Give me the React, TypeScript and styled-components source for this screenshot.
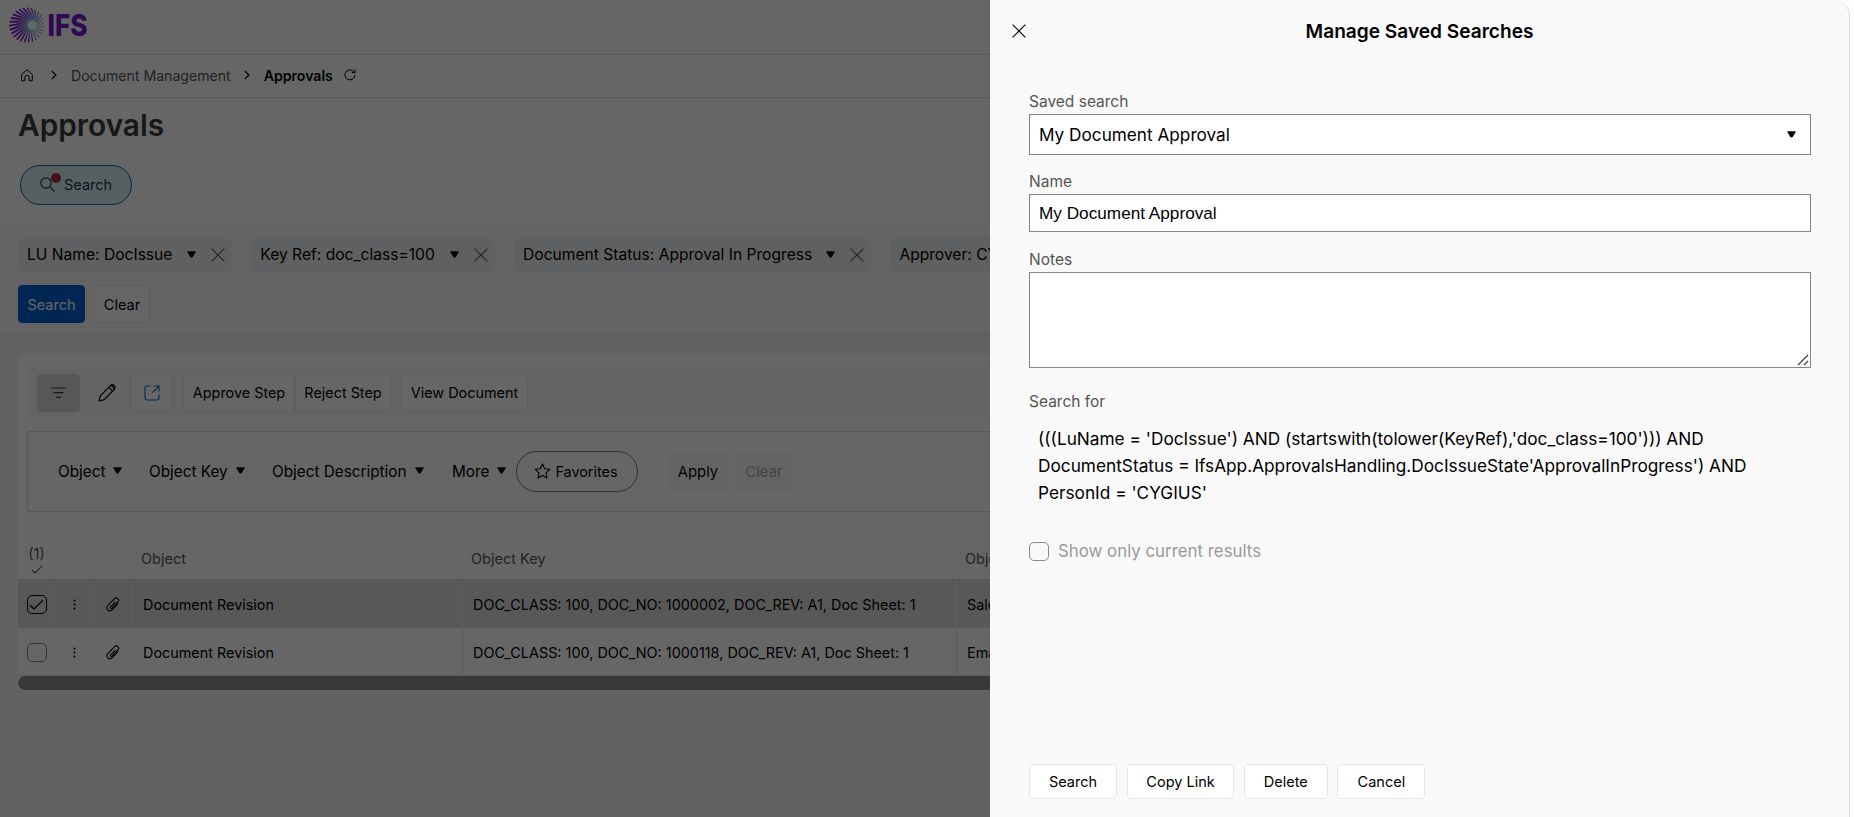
import React from "react";
import styled, { createGlobalStyle, css } from "styled-components";

const GlobalStyle = createGlobalStyle`
  * {
    box-sizing: border-box;
  }

  body {
    margin: 0;
    overflow: hidden;
    background: #f6f4f4;
    color: #000;
    font-family: Inter, "Liberation Sans", sans-serif;
    font-size: 15px;
  }

  button,
  input {
    margin: 0;
    font-family: inherit;
    color: inherit;
  }
`;

const filters = [
  { label: "LU Name: DocIssue", width: 214 },
  { label: "Key Ref: doc_class=100", width: 243.5 },
  { label: "Document Status: Approval In Progress", width: 357 },
  { label: "Approver: CYGIUS", width: 214 },
];

const columnFilters = [
  { label: "Object", width: 91 },
  { label: "Object Key", width: 123 },
  { label: "Object Description", width: 180 },
  { label: "More", width: 64 },
];

const rows = [
  {
    object: "Document Revision",
    key: "DOC_CLASS: 100, DOC_NO: 1000002, DOC_REV: A1, Doc Sheet: 1",
    description: "Sales",
    selected: true,
  },
  {
    object: "Document Revision",
    key: "DOC_CLASS: 100, DOC_NO: 1000118, DOC_REV: A1, Doc Sheet: 1",
    description: "Email",
    selected: false,
  },
];

const RAYS = 27;

const Logo = () => (
  <svg width="92" height="44" viewBox="0 0 92 44">
    <defs>
      <radialGradient id="rays" gradientUnits="userSpaceOnUse" cx="25" cy="19" r="22">
        <stop offset="0.15" stopColor="#9adfe6" />
        <stop offset="0.45" stopColor="#8a78d8" />
        <stop offset="0.75" stopColor="#7a14d0" />
      </radialGradient>
    </defs>
    {Array.from({ length: RAYS }, (_, i) => {
      const a = (i / RAYS) * Math.PI * 2 + 0.08;
      const b = a + 0.55;
      // rays get thinner towards the right side of the wheel
      const w = 1.4 - 0.6 * Math.cos(a);
      return (
        <line
          key={i}
          x1={24.2 + 5.2 * Math.cos(b)}
          y1={19 + 5.2 * Math.sin(b)}
          x2={19 + 17 * Math.cos(a)}
          y2={19 + 17 * Math.sin(a)}
          stroke="url(#rays)"
          strokeWidth={w}
          strokeLinecap="round"
        />
      );
    })}
    <text
      x="39.5"
      y="30.3"
      fontFamily="Inter, sans-serif"
      fontWeight="800"
      fontSize="30.5"
      textLength="40"
      lengthAdjust="spacingAndGlyphs"
      fill="#7a14d0"
    >
      IFS
    </text>
  </svg>
);

const HomeIcon = () => (
  <svg width="12" height="13" viewBox="0 0 12 13" fill="none" stroke="#000" strokeWidth="1">
    <path d="M.7 5.4 6 .8l5.3 4.600v6.400H8.200V8.600a2.200 2.200 0 0 0-4.400 0v3.200H.7z" strokeLinejoin="round" />
  </svg>
);

const ChevronIcon = () => (
  <svg width="6" height="10" viewBox="0 0 6 10" fill="none" stroke="#000" strokeWidth="1.1">
    <path d="m.8 1 4.200 4-4.200 4" />
  </svg>
);

const RefreshIcon = () => (
  <svg width="12" height="12" viewBox="0 0 12 12" fill="none" stroke="#000" strokeWidth="1">
    <path d="M10.900 6A5 5 0 1 1 9.200 2.100L10.800 3.400" />
    <path d="M11 .4v3.200H7.800" />
  </svg>
);

const SearchIcon = () => (
  <svg width="15" height="15" viewBox="0 0 15 15" fill="none" stroke="#17365c" strokeWidth="1.200">
    <circle cx="6" cy="6" r="5.200" />
    <path d="m9.800 9.800 4.800 4.800" />
  </svg>
);

const Caret = () => (
  <svg width="9" height="7" viewBox="0 0 9 7">
    <path d="M.8.2h7.400q.8.200.5.900L5.700 6q-1.200 1-2.400 0L.3 1.100Q0 .4.800.2z" fill="#000" />
  </svg>
);

const CrossIcon = ({ color = "#555" }: { color?: string }) => (
  <svg width="14" height="14" viewBox="0 0 14 14" fill="none" stroke={color} strokeWidth="1.1">
    <path d="m.6.6 12.800 12.800M13.400.6.6 13.400" />
  </svg>
);

const FilterIcon = () => (
  <svg width="15" height="12" viewBox="0 0 15 12" fill="none" stroke="#334" strokeWidth="1.2">
    <path d="M.4 1h14.200M2.600 5.600h9.800M5 10.400h5" />
  </svg>
);

const PencilIcon = () => (
  <svg width="18" height="18" viewBox="0 0 18 18" fill="none" stroke="#000" strokeWidth="1.2">
    <path d="m1 17 1.300-5.200L12.400 1.700a2.600 2.600 0 0 1 3.800 3.800L6.200 15.600z" strokeLinejoin="round" />
    <path d="m10.800 3.400 3.700 3.700M12.400 1.700c2 .2 3.600 1.800 3.800 3.800" />
  </svg>
);

const OpenIcon = () => (
  <svg width="16" height="16" viewBox="0 0 16 16" fill="none" stroke="#1673c8" strokeWidth="1.2">
    <path d="M6.400 1H3.200A2.300 2.300 0 0 0 1 3.200v9.600A2.300 2.300 0 0 0 3.200 15h9.600a2.300 2.300 0 0 0 2.200-2.200V9.600" />
    <path d="M9.600 1H15v5.400M15 1 8.400 7.600" />
  </svg>
);

const StarIcon = () => (
  <svg width="17" height="16" viewBox="0 0 17 16" fill="none" stroke="#000" strokeWidth="1.1">
    <path
      d="m8.500 1 2.200 4.700 5.100.6-3.800 3.500 1 5.100-4.500-2.500L4 14.900l1-5.100L1.200 6.300l5.100-.6z"
      strokeLinejoin="round"
    />
  </svg>
);

const CheckIcon = ({ width, color }: { width: number; color: string }) => (
  <svg width={width} height={width * 0.75} viewBox="0 0 16 12" fill="none" stroke={color} strokeWidth="1.4">
    <path d="m1 6.600 4.400 4L15 1.200" />
  </svg>
);

const DotsIcon = () => (
  <svg width="3" height="11" viewBox="0 0 3 11" fill="#000">
    <circle cx="1.500" cy="1.600" r="1" />
    <circle cx="1.500" cy="5.500" r="1" />
    <circle cx="1.500" cy="9.400" r="1" />
  </svg>
);

const ClipIcon = () => (
  <svg width="14" height="15" viewBox="0 0 14 15" fill="none" stroke="#000" strokeWidth="1.1">
    <path d="M9.500 4.800 4.700 9.900c-.9 1 .4 2.200 1.300 1.300l6-6.400c2-2.300-1-5.300-3.400-3.200L2 8.400c-2.900 3.300 1.100 7.400 4.300 4.300l5.500-5.900" />
  </svg>
);

const ResizeGrip = () => (
  <svg width="12" height="12" viewBox="0 0 12 12" fill="none" stroke="#444" strokeWidth="1.3">
    <path d="M1 11 11 1M7 11l4-4" />
  </svg>
);

export default function App() {
  return (
    <>
      <GlobalStyle />
      <Page>
        <TopBar>
          <Logo />
        </TopBar>
        <Breadcrumbs>
          <HomeIcon />
          <ChevronIcon />
          <Crumb>Document Management</Crumb>
          <ChevronIcon />
          <Crumb $current>Approvals</Crumb>
          <RefreshIcon />
        </Breadcrumbs>
        <Heading>
          <Title>Approvals</Title>
          <SearchPill>
            <PillIcon>
              <SearchIcon />
              <Dot />
            </PillIcon>
            Search
          </SearchPill>
        </Heading>
        <FilterSection>
          <ChipRow>
            {filters.map((f) => (
              <Chip key={f.label} $width={f.width}>
                <ChipLabel>{f.label}</ChipLabel>
                <Caret />
                <CrossIcon />
              </Chip>
            ))}
          </ChipRow>
          <ButtonRow>
            <Button $width={67} $primary>
              Search
            </Button>
            <Button $width={56}>Clear</Button>
          </ButtonRow>
        </FilterSection>
        <Card>
          <Toolbar>
            <IconButton $active>
              <FilterIcon />
            </IconButton>
            <IconButton $bare>
              <PencilIcon />
            </IconButton>
            <IconButton>
              <OpenIcon />
            </IconButton>
            <ButtonGroup>
              <GroupButton $width={110}>Approve Step</GroupButton>
              <GroupButton $width={96}>Reject Step</GroupButton>
            </ButtonGroup>
            <ButtonGroup>
              <GroupButton $width={125}>View Document</GroupButton>
            </ButtonGroup>
          </Toolbar>
          <ColumnFilters>
            {columnFilters.map((f) => (
              <ColumnFilter key={f.label} $width={f.width}>
                {f.label}
                <Caret />
              </ColumnFilter>
            ))}
            <Favorites>
              <StarIcon />
              Favorites
            </Favorites>
            <Button $width={58} $flat>
              Apply
            </Button>
            <Button $width={54} $flat disabled>
              Clear
            </Button>
          </ColumnFilters>
          <HeaderRow>
            <SelectionCount>
              (1)
              <CheckIcon width={12} color="#555" />
            </SelectionCount>
            <span />
            <span />
            <HeaderCell>Object</HeaderCell>
            <HeaderCell>Object Key</HeaderCell>
            <HeaderCell>Object Description</HeaderCell>
          </HeaderRow>
          {rows.map((row) => (
            <Row key={row.key} $selected={row.selected}>
              <IconCell>
                <Checkbox $checked={row.selected}>
                  {row.selected && <CheckIcon width={15} color="#000" />}
                </Checkbox>
              </IconCell>
              <IconCell>
                <DotsIcon />
              </IconCell>
              <IconCell>
                <ClipIcon />
              </IconCell>
              <Cell>{row.object}</Cell>
              <Cell $line>{row.key}</Cell>
              <Cell $line>{row.description}</Cell>
            </Row>
          ))}
          <ScrollBar />
        </Card>
      </Page>
      <Scrim>
        <DrawerEdge>
          <Drawer>
            <DrawerHeader>
              <CrossIcon color="#000" />
              <DrawerTitle>Manage Saved Searches</DrawerTitle>
            </DrawerHeader>
            <Form>
              <Label>Saved search</Label>
              <Select>
                My Document Approval
                <Caret />
              </Select>
              <Label $top={17}>Name</Label>
              <NameInput defaultValue="My Document Approval" />
              <Label $top={18}>Notes</Label>
              <Notes>
                <ResizeGrip />
              </Notes>
              <Label $top={24}>Search for</Label>
              <Query>
                (((LuName = 'DocIssue') AND (startswith(tolower(KeyRef),'doc_class=100'))) AND
                <br />
                DocumentStatus = IfsApp.ApprovalsHandling.DocIssueState'ApprovalInProgress') AND
                <br />
                PersonId = 'CYGIUS'
              </Query>
              <OnlyCurrent>
                <Checkbox $checked={false} />
                Show only current results
              </OnlyCurrent>
            </Form>
            <DrawerActions>
              <ActionButton $width={88}>Search</ActionButton>
              <ActionButton $width={107.5}>Copy Link</ActionButton>
              <ActionButton $width={83.5}>Delete</ActionButton>
              <ActionButton $width={88}>Cancel</ActionButton>
            </DrawerActions>
          </Drawer>
        </DrawerEdge>
      </Scrim>
    </>
  );
}

const Page = styled.div`
  height: 817px;
  overflow: hidden;
  white-space: nowrap;
`;

const TopBar = styled.header`
  height: 55px;
  padding: 6px 8px;
  background: #fff;
  border-bottom: 1px solid #dcdcdc;
`;

const Breadcrumbs = styled.nav`
  display: flex;
  align-items: center;
  height: 43px;
  padding: 0 21px 2px;
  background: #fff;
  border-bottom: 1px solid #dcdcdc;

  svg {
    flex: none;
  }

  svg:nth-of-type(2) {
    margin: 0 14px 0 18px;
  }

  svg:nth-of-type(3) {
    margin: 0 14px 0 13px;
  }

  svg:last-child {
    margin-left: 11px;
  }
`;

const Crumb = styled.span<{ $current?: boolean }>`
  font-size: 14.1px;
  color: ${(p) => (p.$current ? "#000" : "#555")};
  font-weight: ${(p) => (p.$current ? 600 : 400)};
`;

const Heading = styled.section`
  height: 127px;
  padding: 8px 18px 0;
  background: #fff;
`;

const Title = styled.h1`
  margin: 0 0 21px;
  font-size: 29.800px;
  font-weight: 600;
  line-height: 38px;
  color: #3c3c3c;
`;

const SearchPill = styled.div`
  display: flex;
  align-items: center;
  width: 112px;
  height: 40px;
  margin-left: 2px;
  padding: 0 0 1px 19px;
  border: 1px solid #0a5fc0;
  border-radius: 20px;
  background: #d8f0f0;
  color: #17365c;
  font-size: 14.5px;
`;

const PillIcon = styled.span`
  position: relative;
  display: flex;
  margin-right: 9px;
`;

const Dot = styled.i`
  position: absolute;
  top: -4px;
  left: 11px;
  width: 10px;
  height: 10px;
  border-radius: 50%;
  background: #b82850;
`;

const FilterSection = styled.section`
  height: 109px;
  padding: 12px 18px 0;
  background: #fbf9f9;
  border: solid #ebe9e9;
  border-width: 1px 0;
`;

const ChipRow = styled.div`
  display: flex;
  gap: 19.3px;
`;

const Chip = styled.div<{ $width: number }>`
  display: flex;
  align-items: center;
  flex: none;
  width: ${(p) => p.$width}px;
  height: 34px;
  padding: 0 7px 1px 9px;
  border-radius: 6px;
  background: #edf0f2;

  svg + svg {
    margin-left: 15px;
  }
`;

const ChipLabel = styled.span`
  flex: 1;
  font-size: 15.6px;
`;

const ButtonRow = styled.div`
  display: flex;
  gap: 9px;
  margin-top: 13px;
`;

const Button = styled.button<{ $width: number; $primary?: boolean; $flat?: boolean }>`
  width: ${(p) => p.$width}px;
  height: 38px;
  padding: 0;
  border: 1px solid #eceaea;
  border-radius: 4px;
  background: #fff;
  font-size: 14.5px;

  ${(p) =>
    p.$primary &&
    css`
      border-color: #0062d1;
      background: #0062d1;
      color: #fff;
    `}

  ${(p) =>
    p.$flat &&
    css`
      background: #fbfbfb;
      border-color: #f2f2f2;
      font-size: 14.8px;
    `}

  &:disabled {
    color: #aaa;
  }
`;

const Card = styled.section`
  margin: 20px 0 0 18px;
  padding-top: 10px;
  border-radius: 8px 0 0 0;
  background: #fff;
`;

const Toolbar = styled.div`
  display: flex;
  align-items: center;
  height: 57px;
  margin-left: 9px;
  padding: 0 10px;
  gap: 10px;
  background: #fafafa;
`;

const IconButton = styled.button<{ $active?: boolean; $bare?: boolean }>`
  display: flex;
  align-items: center;
  justify-content: center;
  width: 43px;
  height: 38px;
  padding: 0;
  border: 1px solid #ececec;
  border-radius: 4px;
  background: #fff;

  ${(p) =>
    p.$active &&
    css`
      border-color: #dadada;
      background: #dadada;
    `}

  ${(p) =>
    p.$bare &&
    css`
      width: 30px;
      padding-left: 3px;
      border: 0;
      background: none;
    `}
`;

const ButtonGroup = styled.div`
  display: flex;
  height: 38px;
  border: 1px solid #ececec;
  border-radius: 4px;
  background: #fff;
`;

const GroupButton = styled.button<{ $width: number }>`
  width: ${(p) => p.$width}px;
  padding: 0;
  border: 0;
  background: none;
  font-size: 14.4px;

  & + & {
    border-left: 2px solid #ececec;
  }
`;

const ColumnFilters = styled.div`
  display: flex;
  align-items: center;
  height: 81px;
  margin: 10px 0 0 9px;
  padding-left: 30px;
  border: 1px solid #dcdcdc;

  button + button {
    margin-left: 10px;
  }
`;

const ColumnFilter = styled.div<{ $width: number }>`
  display: flex;
  align-items: center;
  flex: none;
  width: ${(p) => p.$width}px;
  font-size: 15.3px;

  svg {
    margin: -2px 0 0 8px;
  }
`;

const Favorites = styled.div`
  display: flex;
  align-items: center;
  justify-content: center;
  gap: 4px;
  width: 122px;
  height: 41px;
  margin-right: 31px;
  padding: 0 2px 1px 0;
  border: 1px solid #777;
  border-radius: 21px;
  font-size: 14.4px;
`;

const gridColumns = css`
  display: grid;
  grid-template-columns: 37px 39px 38px 330px 494px 1fr;
`;

const HeaderRow = styled.div`
  ${gridColumns}
  height: 67px;
  color: #555;
  font-size: 14.5px;
`;

const SelectionCount = styled.div`
  display: flex;
  flex-direction: column;
  align-items: center;
  gap: 3px;
  padding-top: 33px;
`;

const HeaderCell = styled.div`
  padding: 38px 0 0 9px;
`;

const Row = styled.div<{ $selected: boolean }>`
  ${gridColumns}
  height: 48.5px;
  background: ${(p) => (p.$selected ? "#dcdcdc" : "#fff")};
  border-bottom: 1px solid #e6e6e6;

  & > * {
    padding-top: ${(p) => (p.$selected ? 3 : 2)}px;
    box-shadow: ${(p) => (p.$selected ? "inset -1px 0 #ebebeb" : "none")};
  }
`;

const IconCell = styled.div`
  display: flex;
  align-items: center;
  justify-content: center;
`;

const Cell = styled.div<{ $line?: boolean }>`
  display: flex;
  align-items: center;
  padding-left: ${(p) => (p.$line ? 10 : 11)}px;
  border-left: ${(p) => (p.$line ? "1px solid #e2e2e2" : 0)};
  font-size: 14.4px;
`;

const Checkbox = styled.span<{ $checked: boolean }>`
  display: flex;
  align-items: center;
  justify-content: center;
  flex: none;
  width: 20px;
  height: 19px;
  border: 1px solid ${(p) => (p.$checked ? "#000" : "#8a8a8a")};
  border-radius: 5px;
`;

const ScrollBar = styled.div`
  height: 14px;
  border-radius: 7px 0 0 7px;
  background: #8f8f8f;
`;

const Scrim = styled.div`
  position: fixed;
  inset: 0;
  display: flex;
  justify-content: flex-end;
  background: rgba(0, 0, 0, 0.6);
`;

const DrawerEdge = styled.div`
  display: flex;
  width: 864px;
  padding-right: 4px;
  background: #fdfdfd;
`;

const Drawer = styled.aside`
  display: flex;
  flex-direction: column;
  flex: 1;
  background: #f9f9f9;
  border-right: 1px solid #dadada;
  border-radius: 0 16px 0 0;
`;

const DrawerHeader = styled.div`
  display: flex;
  align-items: center;
  height: 62px;
  padding-left: 22px;
`;

const DrawerTitle = styled.h2`
  flex: 1;
  margin: 0 36px 0 0;
  font-size: 19.1px;
  font-weight: 600;
  text-align: center;
`;

const Form = styled.div`
  display: flex;
  flex-direction: column;
  flex: 1;
  padding: 30px 38px 0 39px;
`;

const Label = styled.label<{ $top?: number }>`
  height: 22px;
  margin-top: ${(p) => p.$top ?? 0}px;
  font-size: 15.5px;
  line-height: 20px;
  color: #555;
`;

const Select = styled.div`
  display: flex;
  align-items: center;
  justify-content: space-between;
  height: 41px;
  padding: 0 14px 0 9px;
  border: 1px solid #868686;
  background: #fff;
  font-size: 17.2px;
`;

const NameInput = styled.input`
  height: 38px;
  padding: 0 9px;
  border: 1px solid #868686;
  background: #fff;
  font-family: "Liberation Sans", Arial, sans-serif;
  font-size: 17.2px;
  outline: none;
`;

const Notes = styled.div`
  display: flex;
  align-items: flex-end;
  justify-content: flex-end;
  height: 96px;
  padding: 1px;
  border: 1px solid #868686;
  background: #fff;
`;

const Query = styled.p`
  margin: 11px 0 0;
  padding-left: 9px;
  font-size: 17.25px;
  line-height: 27px;
  white-space: nowrap;
`;

const OnlyCurrent = styled.div`
  display: flex;
  align-items: center;
  gap: 9px;
  margin-top: 35px;
  font-size: 16.85px;
  color: #9a9a9a;
`;

const DrawerActions = styled.div`
  display: flex;
  gap: 9.8px;
  padding: 0 0 18px 39px;
`;

const ActionButton = styled.button<{ $width: number }>`
  width: ${(p) => p.$width}px;
  height: 35px;
  padding: 0 0 1px;
  border: 1px solid #e6e6e6;
  border-radius: 4px;
  background: #fff;
  font-size: 14.5px;
`;
